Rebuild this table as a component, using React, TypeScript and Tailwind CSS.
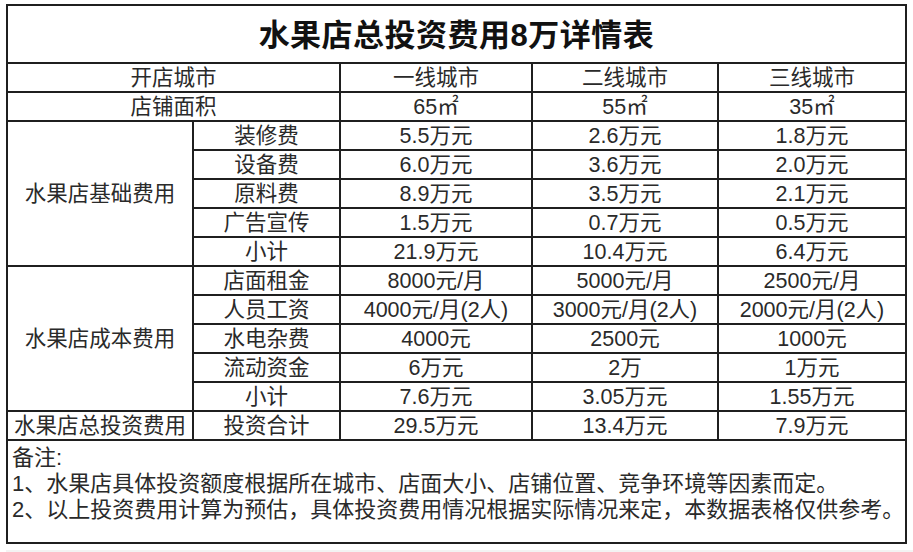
import React from "react";

type Row = { label?: string; span?: number; item: string; v: [string, string, string] };

const rows: Row[] = [
  { label: "水果店基础费用", span: 5, item: "装修费", v: ["5.5万元", "2.6万元", "1.8万元"] },
  { item: "设备费", v: ["6.0万元", "3.6万元", "2.0万元"] },
  { item: "原料费", v: ["8.9万元", "3.5万元", "2.1万元"] },
  { item: "广告宣传", v: ["1.5万元", "0.7万元", "0.5万元"] },
  { item: "小计", v: ["21.9万元", "10.4万元", "6.4万元"] },
  { label: "水果店成本费用", span: 5, item: "店面租金", v: ["8000元/月", "5000元/月", "2500元/月"] },
  { item: "人员工资", v: ["4000元/月(2人)", "3000元/月(2人)", "2000元/月(2人)"] },
  { item: "水电杂费", v: ["4000元", "2500元", "1000元"] },
  { item: "流动资金", v: ["6万元", "2万", "1万元"] },
  { item: "小计", v: ["7.6万元", "3.05万元", "1.55万元"] },
  { label: "水果店总投资费用", span: 1, item: "投资合计", v: ["29.5万元", "13.4万元", "7.9万元"] },
];

const cell = "border-2 border-[#1f1f1f] text-center px-0 pb-0 pt-[3px] leading-none";

export default function App() {
  return (
    <div
      className="min-h-[552px] bg-white pl-[6px] pt-[4px] text-[#2a2a2a]"
      style={{ fontFamily: '"Liberation Sans", "Noto Sans CJK SC", sans-serif' }}
    >
      <table className="w-[901px] table-fixed border-collapse text-[21.5px]">
        <colgroup>
          <col className="w-[186px]" />
          <col className="w-[147px]" />
          <col className="w-[192px]" />
          <col className="w-[186px]" />
          <col className="w-[188px]" />
        </colgroup>
        <tbody>
          <tr className="h-[58px]">
            <td colSpan={5} className={`${cell} text-[31px] font-bold tracking-[0.5px] text-[#111]`}>
              水果店总投资费用8万详情表
            </td>
          </tr>
          <tr className="h-[29px]">
            <td colSpan={2} className={cell}>开店城市</td>
            <td className={cell}>一线城市</td>
            <td className={cell}>二线城市</td>
            <td className={cell}>三线城市</td>
          </tr>
          <tr className="h-[29px]">
            <td colSpan={2} className={cell}>店铺面积</td>
            <td className={cell}>65㎡</td>
            <td className={cell}>55㎡</td>
            <td className={cell}>35㎡</td>
          </tr>
          {rows.map((r, i) => (
            <tr key={i} className="h-[29px]">
              {r.label && (
                <td rowSpan={r.span} className={`${cell} whitespace-nowrap`}>
                  {r.label}
                </td>
              )}
              <td className={cell}>{r.item}</td>
              {r.v.map((v, j) => (
                <td key={j} className={`${cell} whitespace-nowrap`}>{v}</td>
              ))}
            </tr>
          ))}
          <tr className="h-[103px]">
            <td colSpan={5} className="border-2 border-[#1f1f1f] px-[4px] pt-[4px] align-top text-left text-[22px] leading-[26px] whitespace-nowrap">
              <p>备注:</p>
              <p>1、水果店具体投资额度根据所在城市、店面大小、店铺位置、竞争环境等因素而定。</p>
              <p>2、以上投资费用计算为预估，具体投资费用情况根据实际情况来定，本数据表格仅供参考。</p>
            </td>
          </tr>
        </tbody>
      </table>
      <div className="mt-[6px] h-[10px] bg-[#f3f3f3]" />
    </div>
  );
}
